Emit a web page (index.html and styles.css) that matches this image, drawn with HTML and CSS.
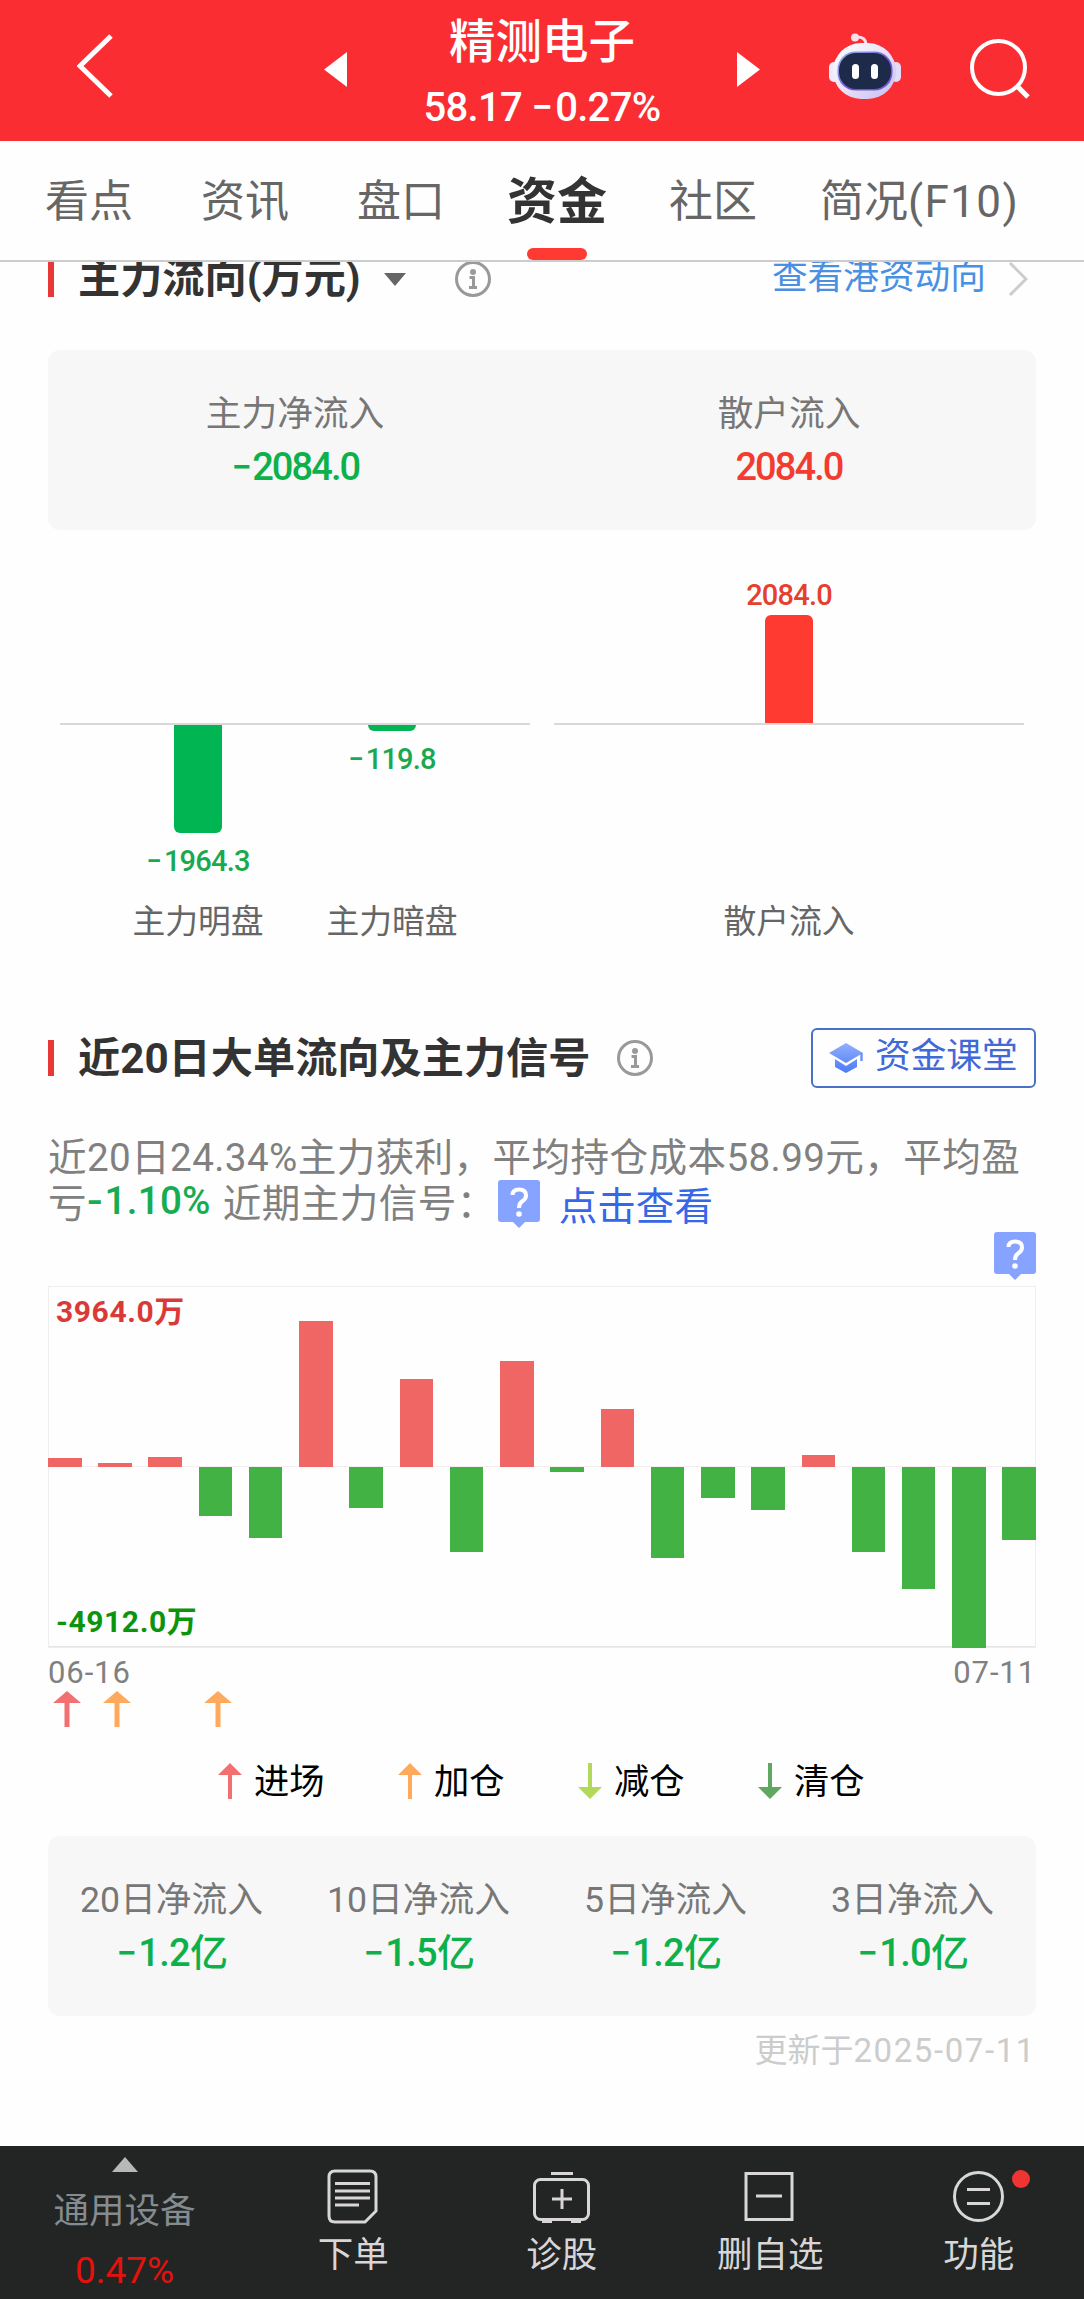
FILE: index.html
```
<!DOCTYPE html>
<html lang="zh-CN">
<head>
    <meta charset="UTF-8">
    <meta name="viewport" content="width=device-width, initial-scale=1.0">
    <title>精测电子 - 资金</title>
    <link rel="stylesheet" href="styles.css">
</head>
<body>
    <header class="header">
        <svg class="back" width="36" height="64" viewBox="0 0 36 64"><path d="M34 2 L3 32 L34 62" fill="none" stroke="#fff" stroke-width="5"/></svg>
        <svg class="prev" width="23" height="35" viewBox="0 0 23 35"><path d="M23 0 V35 L0 17.500 Z" fill="#fff"/></svg>
        <div class="stock">
            <div class="stock-name">精测电子</div>
            <div class="stock-price">58.17 <span class="minus">−</span>0.27%</div>
        </div>
        <svg class="next" width="23" height="35" viewBox="0 0 23 35"><path d="M0 0 V35 L23 17.500 Z" fill="#fff"/></svg>
        <svg class="robot" width="72" height="67" viewBox="0 0 72 67">
            <defs>
                <linearGradient id="shell" x1="0" y1="0" x2="1" y2="1">
                    <stop offset="0" stop-color="#fff"/>
                    <stop offset="0.500" stop-color="#e9e2f6"/>
                    <stop offset="1" stop-color="#c3bdf2"/>
                </linearGradient>
                <linearGradient id="rim" x1="0" y1="0" x2="1" y2="1">
                    <stop offset="0" stop-color="#8fb8e6"/>
                    <stop offset="0.600" stop-color="#7650d8"/>
                    <stop offset="1" stop-color="#6f5fd0"/>
                </linearGradient>
            </defs>
            <path d="M26 4 Q37 3 37 12" fill="none" stroke="#f6dce8" stroke-width="3"/>
            <circle cx="26" cy="4.500" r="4" fill="#f9dfe6"/>
            <rect x="0" y="29" width="10" height="20" rx="5" fill="#eeeafc"/>
            <rect x="62" y="29" width="10" height="20" rx="5" fill="#e2dcf8"/>
            <rect x="4" y="10" width="63" height="56" rx="28" fill="url(#shell)"/>
            <rect x="8.500" y="18.500" width="55" height="39" rx="18" fill="url(#rim)"/>
            <rect x="10" y="20" width="52" height="36" rx="17" fill="#1e2a4a"/>
            <rect x="23" y="31" width="7" height="15" rx="3.500" fill="#fff"/>
            <rect x="42" y="31" width="7" height="15" rx="3.500" fill="#fff"/>
        </svg>
        <svg class="search" width="60" height="60" viewBox="0 0 60 60"><circle cx="28.500" cy="28.500" r="26.500" fill="none" stroke="#fff" stroke-width="4"/><path d="M47 47 L58 58" stroke="#fff" stroke-width="5"/></svg>
    </header>

    <nav class="tabs">
        <span class="tab">看点</span>
        <span class="tab">资讯</span>
        <span class="tab">盘口</span>
        <span class="tab active">资金</span>
        <span class="tab">社区</span>
        <span class="tab last">简况<span class="latin">(F10)</span></span>
    </nav>

    <main class="content">
        <div class="section-head first">
            <h2>主力流向(万元)</h2>
            <i class="caret"></i>
            <svg class="info" width="36" height="36" viewBox="0 0 36 36"><circle cx="18" cy="18" r="16.500" fill="none" stroke="#999" stroke-width="3"/><circle cx="18" cy="11" r="3" fill="#999"/><path d="M14.500 16.500 H18.500 V26 M14 26.500 H22" fill="none" stroke="#999" stroke-width="3"/></svg>
            <a class="hk-link">查看港资动向</a>
            <svg class="chevron" width="20" height="36" viewBox="0 0 20 36"><path d="M2 2 L18 18 L2 34" fill="none" stroke="#ccc" stroke-width="3"/></svg>
        </div>

        <div class="card two">
            <div class="cell"><span class="label">主力净流入</span><span class="value green tight"><span class="minus">−</span>2084.0</span></div>
            <div class="cell"><span class="label">散户流入</span><span class="value red tight">2084.0</span></div>
        </div>

        <div class="flow">
            <div class="flow-group">
                <div class="flow-col">
                    <div class="up"></div>
                    <div class="down"><i class="bar" style="height: 108px"></i><span><span class="minus">−</span>1964.3</span></div>
                    <div class="name">主力明盘</div>
                </div>
                <div class="flow-col">
                    <div class="up"></div>
                    <div class="down"><i class="bar" style="height: 6px"></i><span><span class="minus">−</span>119.8</span></div>
                    <div class="name">主力暗盘</div>
                </div>
            </div>
            <div class="flow-group">
                <div class="flow-col">
                    <div class="up"><span>2084.0</span><i class="bar" style="height: 108px"></i></div>
                    <div class="down"></div>
                    <div class="name">散户流入</div>
                </div>
            </div>
        </div>

        <div class="section-head">
            <h2>近20日大单流向及主力信号</h2>
            <svg class="info" width="36" height="36" viewBox="0 0 36 36"><circle cx="18" cy="18" r="16.500" fill="none" stroke="#999" stroke-width="3"/><circle cx="18" cy="11" r="3" fill="#999"/><path d="M14.500 16.500 H18.500 V26 M14 26.500 H22" fill="none" stroke="#999" stroke-width="3"/></svg>
            <a class="course">
                <svg width="34" height="32" viewBox="0 0 34 32">
                    <defs>
                        <linearGradient id="cap" gradientUnits="userSpaceOnUse" x1="0" y1="0" x2="0" y2="31">
                            <stop offset="0" stop-color="#94b1fb"/>
                            <stop offset="1" stop-color="#4c7af8"/>
                        </linearGradient>
                    </defs>
                    <path d="M17 1 L34 11 L17 21 L0 11 Z" fill="url(#cap)"/>
                    <path d="M6 17 L17 24 L28 17 V25 L17 31 L6 25 Z" fill="url(#cap)"/>
                    <path d="M32.500 11 V19" stroke="#6f93f5" stroke-width="2.500"/>
                </svg>
                <span>资金课堂</span>
            </a>
        </div>

        <div class="summary">
            <div class="line">近20日24.34%主力获利，平均持仓成本58.99元，平均盈</div>
            <div class="line">亏<span class="loss"><span class="dash">-</span>1.10%</span><span class="recent">近期主力信号：</span>
                <svg class="tip" width="42" height="48" viewBox="0 0 42 48"><path d="M3 0 H39 Q42 0 42 3 V39 Q42 42 39 42 H27 L21 48 L15 42 H3 Q0 42 0 39 V3 Q0 0 3 0 Z" fill="#86a3ff"/><path d="M14.500 15 Q14.500 9.500 21 9.500 Q28 9.500 28 15.500 Q28 19 24 21.500 Q21 23.500 21 28" fill="none" stroke="#fff" stroke-width="4"/><circle cx="21" cy="34" r="2.800" fill="#fff"/></svg>
                <a class="view">点击查看</a>
            </div>
        </div>
        <div class="tip-row">
            <svg class="tip" width="42" height="48" viewBox="0 0 42 48"><path d="M3 0 H39 Q42 0 42 3 V39 Q42 42 39 42 H27 L21 48 L15 42 H3 Q0 42 0 39 V3 Q0 0 3 0 Z" fill="#86a3ff"/><path d="M14.500 15 Q14.500 9.500 21 9.500 Q28 9.500 28 15.500 Q28 19 24 21.500 Q21 23.500 21 28" fill="none" stroke="#fff" stroke-width="4"/><circle cx="21" cy="34" r="2.800" fill="#fff"/></svg>
        </div>

        <div class="chart">
            <span class="max">3964.0万</span>
            <span class="min">-4912.0万</span>
            <i class="u" style="height: 9px"></i>
            <i class="u" style="height: 4.500px"></i>
            <i class="u" style="height: 10px"></i>
            <i class="d" style="height: 49px"></i>
            <i class="d" style="height: 71px"></i>
            <i class="u" style="height: 146px"></i>
            <i class="d" style="height: 41px"></i>
            <i class="u" style="height: 88px"></i>
            <i class="d" style="height: 85px"></i>
            <i class="u" style="height: 106px"></i>
            <i class="d" style="height: 5px"></i>
            <i class="u" style="height: 58px"></i>
            <i class="d" style="height: 91px"></i>
            <i class="d" style="height: 31px"></i>
            <i class="d" style="height: 43px"></i>
            <i class="u" style="height: 12px"></i>
            <i class="d" style="height: 85px"></i>
            <i class="d" style="height: 122px"></i>
            <i class="d" style="height: 181px"></i>
            <i class="d" style="height: 73px"></i>
        </div>
        <div class="dates"><span>06-16</span><span>07-11</span></div>
        <div class="signals">
            <svg width="28" height="36" viewBox="0 0 28 36"><path d="M14 0 L28 12 H16.500 V36 H11.500 V12 H0 Z" fill="#f27070"/></svg>
            <svg width="28" height="36" viewBox="0 0 28 36"><path d="M14 0 L28 12 H16.500 V36 H11.500 V12 H0 Z" fill="#ffa95c"/></svg>
            <svg class="skip" width="28" height="36" viewBox="0 0 28 36"><path d="M14 0 L28 12 H16.500 V36 H11.500 V12 H0 Z" fill="#ffa95c"/></svg>
        </div>
        <div class="legend">
            <span><svg width="24" height="36" viewBox="0 0 24 36"><path d="M12 0 L24 12 H14 V36 H10 V12 H0 Z" fill="#f27070"/></svg>进场</span>
            <span><svg width="24" height="36" viewBox="0 0 24 36"><path d="M12 0 L24 12 H14 V36 H10 V12 H0 Z" fill="#ffa95c"/></svg>加仓</span>
            <span><svg width="24" height="36" viewBox="0 0 24 36"><path d="M12 36 L24 24 H14 V0 H10 V24 H0 Z" fill="#b2d95b"/></svg>减仓</span>
            <span><svg width="24" height="36" viewBox="0 0 24 36"><path d="M12 36 L24 24 H14 V0 H10 V24 H0 Z" fill="#5fa862"/></svg>清仓</span>
        </div>

        <div class="card four">
            <div class="cell"><span class="label">20日净流入</span><span class="value green"><span class="minus">−</span>1.2亿</span></div>
            <div class="cell"><span class="label">10日净流入</span><span class="value green"><span class="minus">−</span>1.5亿</span></div>
            <div class="cell"><span class="label">5日净流入</span><span class="value green"><span class="minus">−</span>1.2亿</span></div>
            <div class="cell"><span class="label">3日净流入</span><span class="value green"><span class="minus">−</span>1.0亿</span></div>
        </div>
        <div class="updated">更新于<span>2025-07-11</span></div>
    </main>

    <footer class="toolbar">
        <div class="sector">
            <i class="tri"></i>
            <span class="sector-name">通用设备</span>
            <span class="sector-rate">0.47%</span>
        </div>
        <div class="tool">
            <svg width="60" height="56" viewBox="0 0 60 56" fill="none" stroke="#d8d6d8" stroke-width="3"><path d="M12 3 H47 Q53 3 53 9 V43 L42 54 H12 Q6 54 6 48 V9 Q6 3 12 3 Z"/><path d="M12 15.500 H47 M12 23 H47 M12 30 H47 M12 37 H36"/></svg>
            <span>下单</span>
        </div>
        <div class="tool">
            <svg width="60" height="56" viewBox="0 0 60 56" fill="none" stroke="#d8d6d8" stroke-width="3"><rect x="2.500" y="11.500" width="54" height="40" rx="6"/><path d="M19 5.500 H41 M30 21 V41 M20 31 H40"/><path d="M10 53 H20 M39 53 H49" stroke-width="4"/></svg>
            <span>诊股</span>
        </div>
        <div class="tool">
            <svg width="60" height="56" viewBox="0 0 60 56" fill="none" stroke="#d8d6d8" stroke-width="3"><rect x="6" y="5.500" width="46" height="46"/><path d="M16 28 H42"/></svg>
            <span>删自选</span>
        </div>
        <div class="tool">
            <svg width="60" height="56" viewBox="0 0 60 56" fill="none" stroke="#d8d6d8" stroke-width="3"><circle cx="29.500" cy="28.500" r="24"/><path d="M18 21.500 H41 M18 35.500 H41"/></svg>
            <span>功能</span>
            <i class="dot"></i>
        </div>
    </footer>
</body>
</html>
```
FILE: styles.css
```
* {
    box-sizing: border-box;
}

body {
    margin: 0;
    width: 1084px;
    height: 2299px;
    display: flex;
    flex-direction: column;
    overflow: hidden;
    background-color: #fefefe;
    font-family: Roboto, "Noto Sans CJK SC", sans-serif;
    color: #333;
}

svg {
    display: block;
    flex: none;
}

/* the figures use a short wide minus */
.minus {
    display: inline-block;
    margin-right: 2px;
    transform: scaleX(0.95);
}

.header {
    height: 141px;
    flex: none;
    display: flex;
    align-items: flex-start;
    padding-left: 77px;
    background-color: #fa2d33;
    color: #fff;
}

.back {
    margin-top: 34px;
}

.prev {
    margin: 52px 0 0 211px;
}

.stock {
    width: 390px;
    text-align: center;
    padding-top: 10px;
}

.stock-name {
    font-size: 46.5px;
    font-weight: 500;
    line-height: 65px;
}

.stock-price {
    font-size: 40px;
    font-weight: 500;
    line-height: 66px;
    letter-spacing: -0.7px;
}

.next {
    margin-top: 52px;
}

.robot {
    margin: 33px 0 0 69px;
}

.search {
    margin: 39px 0 0 69px;
}

.tabs {
    position: relative;
    z-index: 1;
    height: 121px;
    flex: none;
    display: flex;
    align-items: center;
    padding: 3px 0 0 45px;
    border-bottom: 2px solid #ccc;
    background-color: #fefefe;
    font-size: 44px;
    color: #666;
    gap: 68px;
    white-space: nowrap;
}

.tab {
    line-height: 64px;
}

.tab.active {
    position: relative;
    margin: 0 -6px;
    font-size: 50px;
    font-weight: 700;
    color: #333;
}

.tab.last {
    margin-left: -5px;
}

.latin {
    letter-spacing: 1.4px;
}

/* underline of the selected tab */
.tab.active::after {
    content: "";
    position: absolute;
    left: 20px;
    bottom: -26px;
    width: 60px;
    height: 12px;
    border-radius: 6px;
    background-color: #ff3a33;
}

.content {
    flex: 1;
    padding: 0 48px;
}

.section-head {
    display: flex;
    align-items: center;
    height: 60px;
    margin-top: 77px;
}

.section-head::before {
    content: "";
    width: 6px;
    height: 36px;
    background-color: #e93636;
}

.section-head.first {
    height: 34px;
    margin-top: 0;
}

h2 {
    margin: 0 0 0 24px;
    padding-top: 2px;
    font-size: 42.2px;
    font-weight: 700;
    line-height: 60px;
    white-space: nowrap;
}

.first h2 {
    padding-top: 0;
}

.caret {
    margin: 0 0 0 23px;
    border: 11.5px solid transparent;
    border-top: 13px solid #666;
    border-bottom: 0;
}

.info {
    margin-left: 27px;
}

.first .info {
    margin-left: 49px;
}

.hk-link {
    margin-left: auto;
    margin-right: 22px;
    padding-bottom: 4px;
    font-size: 35.7px;
    line-height: 52px;
    color: #4a90e2;
}

.chevron {
    margin-right: 8px;
}

.card {
    display: grid;
    height: 180px;
    padding-top: 38px;
    border-radius: 12px;
    background-color: #f7f7f7;
}

.two {
    grid-template-columns: 1fr 1fr;
    margin-top: 54px;
}

.four {
    grid-template-columns: repeat(4, 1fr);
    margin-top: 35px;
}

.cell {
    display: flex;
    flex-direction: column;
    align-items: center;
}

.label {
    font-size: 35.7px;
    line-height: 53px;
    color: #777;
}

.value {
    font-size: 38px;
    font-weight: 500;
    line-height: 53px;
    letter-spacing: -0.7px;
}

.tight {
    letter-spacing: -1.9px;
}

.green {
    color: #0db14b;
}

.red {
    color: #f23c30;
}

.flow {
    display: flex;
    gap: 24px;
    padding: 0 12px;
    margin-top: 30px;
}

.flow-group {
    flex: 1;
    display: flex;
    justify-content: center;
    height: 391px;
    background: linear-gradient(#d8d8d8, #d8d8d8) 0 163px / 100% 2px no-repeat;
}

.flow-col {
    width: 194px;
    font-size: 29px;
}

.up,
.down {
    display: flex;
    flex-direction: column;
    align-items: center;
}

.up {
    height: 163px;
    justify-content: flex-end;
    color: #e5402f;
}

.down {
    height: 174px;
    padding-top: 2px;
    color: #1aa850;
}

.up span,
.down > span {
    font-weight: 500;
    line-height: 40px;
    letter-spacing: -0.8px;
}

.down > span {
    margin-top: 8px;
}

.bar {
    width: 48px;
}

.up .bar {
    background-color: #ff3a30;
    border-radius: 6px 6px 0 0;
}

.down .bar {
    background-color: #00b552;
    border-radius: 0 0 6px 6px;
}

.name {
    text-align: center;
    font-size: 32.8px;
    line-height: 50px;
    color: #666;
}

.course {
    display: flex;
    align-items: center;
    width: 225px;
    height: 60px;
    margin-left: auto;
    padding-left: 16px;
    gap: 12px;
    border: 2px solid #4a70c8;
    border-radius: 6px;
    font-size: 35.7px;
    color: #4169d8;
    white-space: nowrap;
}

.course span {
    line-height: 52px;
    padding-bottom: 5px;
}

.summary {
    margin-top: 43px;
    font-size: 38.6px;
    letter-spacing: 0.4px;
    color: #808080;
    white-space: nowrap;
}

.line {
    display: flex;
    align-items: center;
    height: 46px;
}

.loss {
    color: #17ab52;
    font-weight: 500;
    letter-spacing: 0.3px;
}

.dash {
    display: inline-block;
    margin-right: 4px;
    transform: scaleX(1.2);
    transform-origin: left;
}

.recent {
    margin-left: 12px;
}

.line .tip {
    margin: 8px 0 0 2px;
}

.view {
    margin-left: 19px;
    padding-top: 6px;
    letter-spacing: 0;
    color: #3567e8;
}

.tip-row {
    display: flex;
    justify-content: flex-end;
    height: 54px;
    margin-top: 9px;
}

.chart {
    position: relative;
    display: flex;
    align-items: flex-start;
    justify-content: space-between;
    height: 362px;
    background: linear-gradient(#f5eeee, #f5eeee) 0 180px / 100% 1px no-repeat;
    box-shadow: inset 0 0 0 1px #eee, inset 0 -2px 0 #e4e4e4;
}

.chart i {
    width: 33.5px;
}

.chart .u {
    align-self: flex-end;
    margin-bottom: 181px;
    background-color: #ef6664;
}

.chart .d {
    margin-top: 181px;
    background-color: #43b244;
}

/* scale labels lie over the plot */
.max,
.min {
    position: absolute;
    left: 8px;
    font-size: 30px;
    font-weight: 700;
    line-height: 40px;
    letter-spacing: 0.6px;
}

.max {
    top: 6px;
    color: #d93a37;
}

.min {
    bottom: 6px;
    color: #0c950c;
}

.dates {
    display: flex;
    justify-content: space-between;
    font-size: 31px;
    line-height: 43px;
    padding-top: 3px;
    letter-spacing: 0.9px;
    color: #808080;
}

.signals {
    display: flex;
    gap: 22px;
    padding-left: 5px;
    margin-top: -3px;
}

.signals .skip {
    margin-left: 51px;
}

.legend {
    display: flex;
    padding-left: 170px;
    margin-top: 36px;
    font-size: 35.3px;
    line-height: 38px;
    color: #000;
}

.legend span {
    display: flex;
    width: 180px;
    gap: 12px;
}

.updated {
    text-align: right;
    margin-top: 11px;
    font-size: 33px;
    line-height: 48px;
    color: #ccc;
}

.updated span {
    letter-spacing: 1.6px;
}

.toolbar {
    display: flex;
    flex: none;
    height: 153px;
    background-color: #222523;
    color: #d8d6d8;
    font-size: 35.5px;
}

.sector {
    width: 249px;
    display: flex;
    flex-direction: column;
    align-items: center;
    padding-top: 11px;
}

.tri {
    border: 13px solid transparent;
    border-bottom: 15px solid #b8b8b8;
    border-top: 0;
}

.sector-name {
    margin-top: 11px;
    line-height: 56px;
    color: #858b8f;
}

.sector-rate {
    font-size: 37px;
    line-height: 64px;
    color: #e6100c;
}

.tool {
    position: relative;
    width: 208.5px;
    display: flex;
    flex-direction: column;
    align-items: center;
    padding-top: 22px;
    line-height: 62px;
}

/* unread mark */
.dot {
    position: absolute;
    top: 24px;
    right: 53px;
    width: 18px;
    height: 18px;
    border-radius: 50%;
    background-color: #f03434;
}
```
